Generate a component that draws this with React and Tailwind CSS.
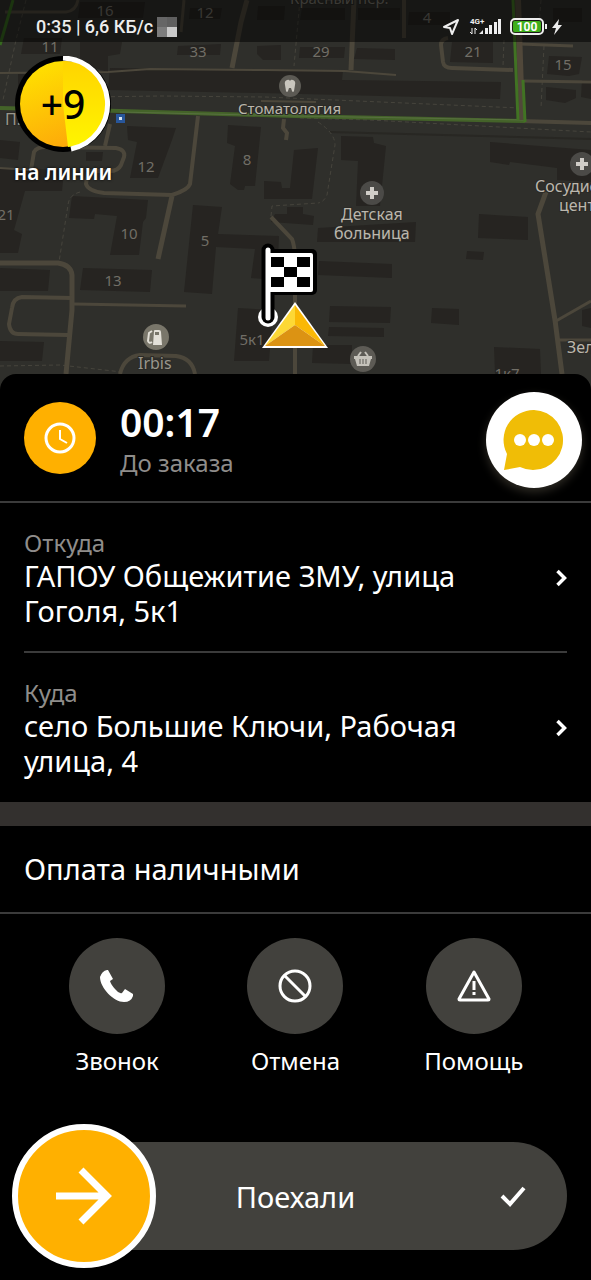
import React from "react";
import { ChevronRight } from "lucide-react";

const buildings = [
  "80,2 145,2 143,18 78,18",
  "190,8 222,8 220,19 189,19",
  "258,6 285,6 284,20 257,20",
  "24,38 62,38 60,54 21,54",
  "80,42 122,42 120,54 108,56 108,72 80,64",
  "178,46 221,44 220,55 177,55",
  "257,46 281,45 281,60 263,60 257,54",
  "302,8 345,8 345,20 300,20",
  "300,47 345,47 344,58 299,58",
  "357,48 395,49 395,60 354,59",
  "358,8 400,8 400,20 358,20",
  "409,12 450,12 450,25 408,25",
  "452,42 493,42 493,63 450,62",
  "549,56 582,57 579,74 569,76 547,74",
  "546,87 576,90 576,98 565,103 546,100",
  "582,80 591,80 591,99 581,97",
  "553,8 582,8 582,22 553,22",
  "110,68 343,71 342,80 501,82 500,99 341,95 262,93 108,90",
  "18,74 40,74 38,88 18,88",
  "127,126 176,128 172,140 158,178 130,178 137,142 128,140",
  "228,125 261,127 255,186 245,186 244,190 238,190 230,184 235,146 227,143",
  "86,152 103,152 102,161 86,161",
  "341,136 373,137 374,143 386,146 380,206 356,206 358,161 341,160",
  "490,142 591,150 591,182 557,180 557,168 510,162 509,165 490,162",
  "0,140 20,142 18,160 0,158",
  "0,168 64,170 62,191 25,191 14,230 22,234 18,253 0,253",
  "72,196 148,200 146,218 143,222 139,255 110,255 117,216 95,214 94,219 69,218",
  "193,205 222,207 218,234 279,236 277,280 251,278 255,249 216,247 212,294 184,292",
  "264,181 281,182 282,188 290,188 294,150 318,148 312,199 264,199",
  "287,207 303,207 303,214 314,216 313,225 271,222 275,214 287,214",
  "0,268 50,270 48,291 0,291",
  "83,268 152,270 150,292 80,290",
  "0,341 44,342 42,361 0,361",
  "238,308 273,310 269,361 234,361",
  "318,228 416,222 415,242 317,242",
  "479,214 528,217 528,240 478,238",
  "467,251 484,252 483,260 466,259",
  "319,261 392,264 392,278 318,275",
  "330,306 391,307 390,323 329,322",
  "329,327 384,328 384,337 328,336",
  "432,308 459,309 459,325 431,323",
  "313,345 352,345 352,364 312,363",
  "494,347 540,349 541,374 495,374",
  "582,310 591,308 591,328 582,326",
];

const roads = [
  { d: "M5 12 L66 12 Q76 11 78 0", w: 3 },
  { d: "M247 0 L241 22 L232 68", w: 5 },
  { d: "M184 0 L181 32", w: 3 },
  { d: "M354 0 L351 70", w: 5 },
  { d: "M404 0 L404 38", w: 4 },
  { d: "M0 73 L108 72 L150 69 L265 70 L345 71 L396 75", w: 2 },
  { d: "M448 38 Q441 39 441 45 L443 62 Q444 68 452 68 L513 70", w: 4 },
  { d: "M520 44 L573 46", w: 3 },
  { d: "M523 81 L591 82", w: 3 },
  { d: "M520 121 L591 123", w: 4 },
  { d: "M261 101 L316 102", w: 2 },
  { d: "M284 119 L283 128 L287 133 L286 140", w: 4 },
  { d: "M110 124 L105 146", w: 4 },
  { d: "M198 116 L190 184 Q188 190 172 195 L104 193 Q88 191 86 184 L88 172", w: 4 },
  { d: "M31 170 L34 152 Q37 147 45 147 L116 148 Q126 150 124 157 L121 165 Q118 171 110 171 L88 171", w: 4 },
  { d: "M0 168 L30 170", w: 2 },
  { d: "M172 196 L158 259", w: 5 },
  { d: "M0 263 L58 263 Q71 265 72 275 L72 310 L66 374", w: 5 },
  { d: "M72 298 L22 297 Q13 298 12 308 L9 324 Q10 334 18 334 L68 335", w: 4 },
  { d: "M74 304 L186 306", w: 3 },
  { d: "M120 374 Q124 357 140 355 L176 356 Q192 358 195 374", w: 4 },
  { d: "M271 217 L292 239 Q295 247 295 260 L295 374", w: 4 },
  { d: "M546 192 L538 214 L555 320 L562 374", w: 5 },
  { d: "M556 321 L591 301", w: 3 },
  { d: "M559 340 L591 340", w: 3 },
];

const paths = [
  "M26 0 L16 40 L3 100",
  "M20 98 L160 96 L265 97 L520 108",
  "M300 118 L370 120 L591 132",
  "M318 122 Q335 133 335 145 L327 195 Q324 202 318 203",
  "M300 0 L294 66",
  "M541 0 L539 26",
  "M504 40 L503 66",
  "M544 46 L541 108",
  "M80 192 Q69 195 68 205 L59 262",
  "M0 366 L60 365 L122 372",
  "M271 216 L272 206 L318 203",
];

const houseNumbers = [
  { x: 105, y: 16, t: "16" },
  { x: 205, y: 18, t: "12" },
  { x: 427, y: 23, t: "4" },
  { x: 50, y: 52, t: "11" },
  { x: 198, y: 57, t: "33" },
  { x: 321, y: 57, t: "29" },
  { x: 473, y: 57, t: "21" },
  { x: 563, y: 70, t: "15" },
  { x: 146, y: 172, t: "12" },
  { x: 247, y: 165, t: "8" },
  { x: 6, y: 220, t: "21" },
  { x: 129, y: 239, t: "10" },
  { x: 205, y: 246, t: "5" },
  { x: 113, y: 286, t: "13" },
  { x: 252, y: 345, t: "5к1" },
  { x: 507, y: 379, t: "1к7" },
];

const places = [
  { x: 290, y: 4, t: "Красный пер.", size: 15, fill: "#77746b" },
  { x: 238, y: 114, t: "Стоматология", size: 15, fill: "#bbb7ad" },
  { x: 341, y: 220, t: "Детская", size: 16, fill: "#bbb7ad" },
  { x: 334, y: 239, t: "больница", size: 16, fill: "#bbb7ad" },
  { x: 535, y: 192, t: "Сосудистый", size: 16, fill: "#bbb7ad" },
  { x: 559, y: 211, t: "центр", size: 16, fill: "#bbb7ad" },
  { x: 138, y: 369, t: "Irbis", size: 16, fill: "#99968c" },
  { x: 567, y: 353, t: "Зелё", size: 16, fill: "#bbb7ad" },
  { x: 5, y: 125, t: "П.", size: 16, fill: "#99968c" },
];

function CityMap() {
  return (
    <svg
      className="absolute inset-0 h-full w-full font-['Noto_Sans',sans-serif]"
      viewBox="0 0 591 394"
      preserveAspectRatio="xMidYMin slice"
      aria-hidden="true"
    >
      <rect width="591" height="394" fill="#2f2f2b" />
      {buildings.map((points) => (
        <polygon key={points} points={points} fill="#262421" />
      ))}
      <path d="M330 132 L591 139" stroke="#282723" strokeWidth="2" fill="none" />
      {paths.map((d) => (
        <path key={d} d={d} fill="none" stroke="#46443c" strokeWidth="1" strokeDasharray="4 3" />
      ))}
      {roads.map((road) => (
        <path key={road.d} d={road.d} fill="none" stroke="#4c473b" strokeWidth={road.w} />
      ))}
      {/* Traffic */}
      <path d="M0 108 L120 111 L295 116 L525 121" fill="none" stroke="#446329" strokeWidth="4" />
      <path d="M120 112 L295 116 L525 120" fill="none" stroke="#587040" strokeWidth="1" />
      <path d="M518 0 L522 120" fill="none" stroke="#51483a" strokeWidth="6" />
      <path d="M513 0 L518 120 M523 80 L525 122" fill="none" stroke="#417323" strokeWidth="3" />
      <path d="M13 0 L0 45" fill="none" stroke="#36691f" strokeWidth="3" />

      {houseNumbers.map((h) => (
        <text key={h.x + h.t} x={h.x} y={h.y} fontSize="15" textAnchor="middle" fill="#716e66">
          {h.t}
        </text>
      ))}
      {places.map((p) => (
        <text key={p.t} x={p.x} y={p.y} fontSize={p.size} fill={p.fill} stroke="#2b2a26" strokeWidth="2" paintOrder="stroke">
          {p.t}
        </text>
      ))}

      {/* Bus stop */}
      <rect x="116" y="114" width="9" height="9" fill="#28569a" />
      <rect x="119" y="117" width="3" height="3" fill="#d5e2ee" />

      {/* Dentist */}
      <circle cx="290" cy="86" r="11" fill="#5c5a54" />
      <path d="M287 80 q-3 1 -2 5 l1 6 q1 2 2 0 l1 -3 h2 l1 3 q1 2 2 0 l1 -6 q1 -4 -2 -5 q-2 -1 -3 1 q-1 -2 -3 -1z" fill="#c9c6be" />
      {/* Hospitals */}
      <circle cx="372" cy="193" r="12" fill="#4b4a47" />
      <path d="M372 187 V199 M366 193 H378" stroke="#d0cdc8" strokeWidth="4" />
      <circle cx="582" cy="164" r="12" fill="#4b4a47" />
      <path d="M582 158 V170 M576 164 H588" stroke="#d0cdc8" strokeWidth="4" />
      {/* Fuel station */}
      <circle cx="156" cy="337" r="13" fill="#79766a" />
      <path d="M153 345 L154 331 q0 -1 1 -1 h4 q2 0 2 2 L162 345z" fill="#e3e0d8" />
      <rect x="155" y="332" width="4" height="3" fill="#79766a" />
      <path d="M152 331 L149 333 L148 341 q1 3 4 1" fill="none" stroke="#e3e0d8" strokeWidth="2" />
      {/* Shop */}
      <circle cx="363" cy="359" r="13" fill="#5d5b55" />
      <path d="M354 356 H372 V359 H371 L369 366 H357 L355 359 H354z" fill="#c5c2ba" />
      <path d="M358 356 L361 352 M368 356 L365 352" stroke="#c5c2ba" strokeWidth="2" />
      <path d="M360 359 V364 M363 359 V364 M366 359 V364" stroke="#5d5b55" strokeWidth="1" />

      {/* Finish flag */}
      <circle cx="268" cy="317" r="10" fill="#fff" />
      <path d="M268 250 V317" stroke="#000" strokeWidth="13" strokeLinecap="round" />
      <rect x="266" y="249" width="51" height="46" rx="5" fill="#000" />
      <rect x="268" y="253" width="45" height="39" rx="2" fill="#fff" />
      <path d="M271 257h13v10h-13z M297 257h13v10h-13z M284 267h13v10h-13z M271 277h13v10h-13z M297 277h13v10h-13z" fill="#000" />
      <path d="M268 250 V318" stroke="#fff" strokeWidth="5" strokeLinecap="round" />
      {/* Car position */}
      <path d="M295 302 L328 348 H262z" fill="#fff" />
      <path d="M295 305 V325 L265 346z" fill="#fdd835" />
      <path d="M295 305 V325 L325 346z" fill="#fab806" />
      <path d="M295 325 L325 346 H265z" fill="#dc9313" />
    </svg>
  );
}

function StatusBar() {
  return (
    <div className="relative flex h-[42px] items-center justify-between bg-black/50 pt-3 pr-6 pl-9 font-['Roboto',sans-serif] text-lg font-medium text-[#eee]">
      <div className="flex items-center gap-1">
        <span>0:35 | 6,6 КБ/с</span>
        <span className="grid size-5 grid-cols-2 bg-[#6d6d6d]">
          <i className="bg-[#666]" />
          <i className="bg-[#5f5f5f]" />
          <i className="bg-[#7d7d7d]" />
          <i className="bg-[#c9c9c9]" />
        </span>
      </div>
      <svg width="125" height="20" viewBox="0 0 125 20" fill="none" aria-hidden="true">
        <path d="M2 10 L16 3 L10 17 L8 11z" stroke="#eee" strokeWidth="2" strokeLinejoin="round" />
        <text x="28" y="7" fontSize="8" fontWeight="700" fill="#eee">4G+</text>
        <path d="M30 11 V17 L28 15 M33 17 V11 L35 13" stroke="#eee" strokeWidth="1" />
        <path d="M37 17 L41 13 V17z M43 11h3v6h-3z M47 8h3v9h-3z M52 5h3v12h-3z M56 2h3v15h-3z" fill="#eee" />
        <rect x="69" y="2" width="32" height="15" rx="4" stroke="#eee" strokeWidth="2" />
        <rect x="71" y="4" width="28" height="11" rx="2" fill="#3faf1c" />
        <path d="M104 7 V12" stroke="#eee" strokeWidth="2" />
        <text x="85" y="14" fontSize="12" fontWeight="700" textAnchor="middle" fill="#fff">100</text>
        <path d="M117 2 L110 11 H114 L112 18 L120 8 H116z" fill="#eee" />
      </svg>
    </div>
  );
}

function PriorityBadge() {
  return (
    <button type="button" className="relative mt-[14px] flex w-[126px] flex-col items-center">
      <span className="relative flex size-24 items-center justify-center">
        <svg className="absolute inset-0" width="96" height="96" viewBox="0 0 96 96" aria-hidden="true">
          <defs>
            <linearGradient id="badgeLeft" x1="0.3" y1="0" x2="0.7" y2="1">
              <stop offset="0" stopColor="#ffe100" />
              <stop offset="1" stopColor="#fda60a" />
            </linearGradient>
            <linearGradient id="badgeRight" x1="0" y1="0" x2="0" y2="1">
              <stop offset="0" stopColor="#ffd400" />
              <stop offset="1" stopColor="#fff500" />
            </linearGradient>
          </defs>
          <circle cx="48" cy="48" r="48" fill="#000" />
          <circle cx="48" cy="48" r="43" fill="url(#badgeLeft)" />
          <path d="M48 5 A43 43 0 0 1 53 91 L48 48z" fill="url(#badgeRight)" />
          <path d="M48 2 A46 46 0 0 1 56 93" fill="none" stroke="#fff" strokeWidth="5" />
        </svg>
        <span className="relative text-[39px] leading-[48px] font-medium text-black">+9</span>
      </span>
      <span className="mt-1 text-[21px] leading-8 font-semibold text-white [text-shadow:0_0_3px_#000]">на линии</span>
    </button>
  );
}

function AddressRow({ label, address }) {
  return (
    <button type="button" className="flex w-full items-center justify-between py-6 text-left">
      <span className="block max-w-[460px]">
        <span className="block text-2xl leading-[31px] text-[#8f8d8b]">{label}</span>
        <span className="block text-[29px] leading-[35px]">{address}</span>
      </span>
      <ChevronRight className="-mr-2 size-7" strokeWidth={3} strokeLinecap="butt" strokeLinejoin="miter" />
    </button>
  );
}

function PhoneIcon() {
  return (
    <svg width="36" height="36" viewBox="0 0 36 36" aria-hidden="true">
      <path
        d="M8 2 Q3 3 1 9 C1 20 15 34 25 34 Q32 34 34 28 V26 L26 21 L23 25 Q20 26 17 22 Q12 17 11 13 L14 11 L9 2z"
        fill="#fff"
      />
    </svg>
  );
}

function CancelIcon() {
  return (
    <svg width="36" height="36" viewBox="0 0 36 36" fill="none" stroke="#fff" strokeWidth="3" aria-hidden="true">
      <circle cx="18" cy="18" r="15" />
      <path d="M8 8 L28 28" />
    </svg>
  );
}

function HelpIcon() {
  return (
    <svg width="36" height="36" viewBox="0 0 36 36" fill="none" stroke="#fff" strokeWidth="3" aria-hidden="true">
      <path d="M18 4 L33 31 Q33 32 32 32 H4 Q3 32 3 31z" strokeLinejoin="round" />
      <path d="M18 13 V22 M18 24 V27" />
    </svg>
  );
}

const actions = [
  { label: "Звонок", Icon: PhoneIcon },
  { label: "Отмена", Icon: CancelIcon },
  { label: "Помощь", Icon: HelpIcon },
];

export default function App() {
  return (
    <main className="w-full bg-black font-['Noto_Sans',sans-serif] text-white">
      <section className="relative h-[394px] overflow-hidden">
        <CityMap />
        <StatusBar />
        <PriorityBadge />
      </section>

      <section className="relative -mt-5 rounded-t-2xl bg-black">
        {/* Timer */}
        <header className="flex h-[129px] items-center justify-between border-b-2 border-[#3b3b3b] pr-[9px] pl-6">
          <div className="flex items-center gap-6">
            <span className="flex size-[72px] items-center justify-center rounded-full bg-[#ffb000]">
              <svg width="32" height="32" viewBox="0 0 32 32" fill="none" stroke="#fff" aria-hidden="true">
                <circle cx="16" cy="16" r="14" strokeWidth="3" />
                <path d="M16 8 V17 L23 21" strokeWidth="2" />
              </svg>
            </span>
            <div>
              <h1 className="text-[39px] leading-[50px] font-semibold">00:17</h1>
              <p className="text-2xl leading-[31px] text-[#8f8d8b]">До заказа</p>
            </div>
          </div>
          <button
            type="button"
            aria-label="Чат"
            className="mt-1 flex size-24 items-center justify-center rounded-full bg-white shadow-[0_4px_10px_rgba(255,240,200,0.18)]"
          >
            <svg width="62" height="62" viewBox="0 0 62 62" aria-hidden="true">
              <path d="M31 1 A30 30 0 1 1 17 58 L1 61 L4 45 A30 30 0 0 1 31 1z" fill="#f0bd06" />
              <circle cx="17" cy="31" r="6" fill="#fff" />
              <circle cx="31" cy="31" r="6" fill="#fff" />
              <circle cx="45" cy="31" r="6" fill="#fff" />
            </svg>
          </button>
        </header>

        {/* Route */}
        <div className="px-6">
          <AddressRow label="Откуда" address="ГАПОУ Общежитие ЗМУ, улица Гоголя, 5к1" />
          <hr className="-mt-px border-t-2 border-[#3b3b3b]" />
          <AddressRow label="Куда" address="село Большие Ключи, Рабочая улица, 4" />
        </div>

        <p className="border-t-[24px] border-b-2 border-t-[#33302e] border-b-[#3b3b3b] px-6 py-[25px] text-[29px] leading-[36px]">
          Оплата наличными
        </p>

        {/* Actions */}
        <div className="grid grid-cols-3 px-7 pt-6">
          {actions.map(({ label, Icon }) => (
            <button type="button" key={label} className="flex flex-col items-center gap-3">
              <span className="flex size-24 items-center justify-center rounded-full bg-[#42413d]">
                <Icon />
              </span>
              <span className="text-2xl leading-[30px]">{label}</span>
            </button>
          ))}
        </div>

        {/* Start the ride */}
        <div className="px-6 pt-[66px] pb-[30px]">
          <button
            type="button"
            className="relative grid h-[108px] w-full grid-cols-[1fr_auto_1fr] items-center rounded-full bg-[#42413d] pr-10"
          >
            <span className="absolute -top-[18px] -left-3 flex size-36 items-center justify-center rounded-full border-[6px] border-white bg-[#ffb000]">
              <svg width="60" height="60" viewBox="0 0 60 60" fill="none" stroke="#fff" strokeWidth="7" aria-hidden="true">
                <path d="M2 30 H54 M27 4 L53 30 L27 56" />
              </svg>
            </span>
            <span className="col-start-2 pl-10 text-[29px] leading-[35px]">Поехали</span>
            <svg className="justify-self-end" width="28" height="24" viewBox="0 0 28 24" fill="none" stroke="#fff" strokeWidth="4" aria-hidden="true">
              <path d="M3 12 L11 20 L25 4" />
            </svg>
          </button>
        </div>
      </section>
    </main>
  );
}
